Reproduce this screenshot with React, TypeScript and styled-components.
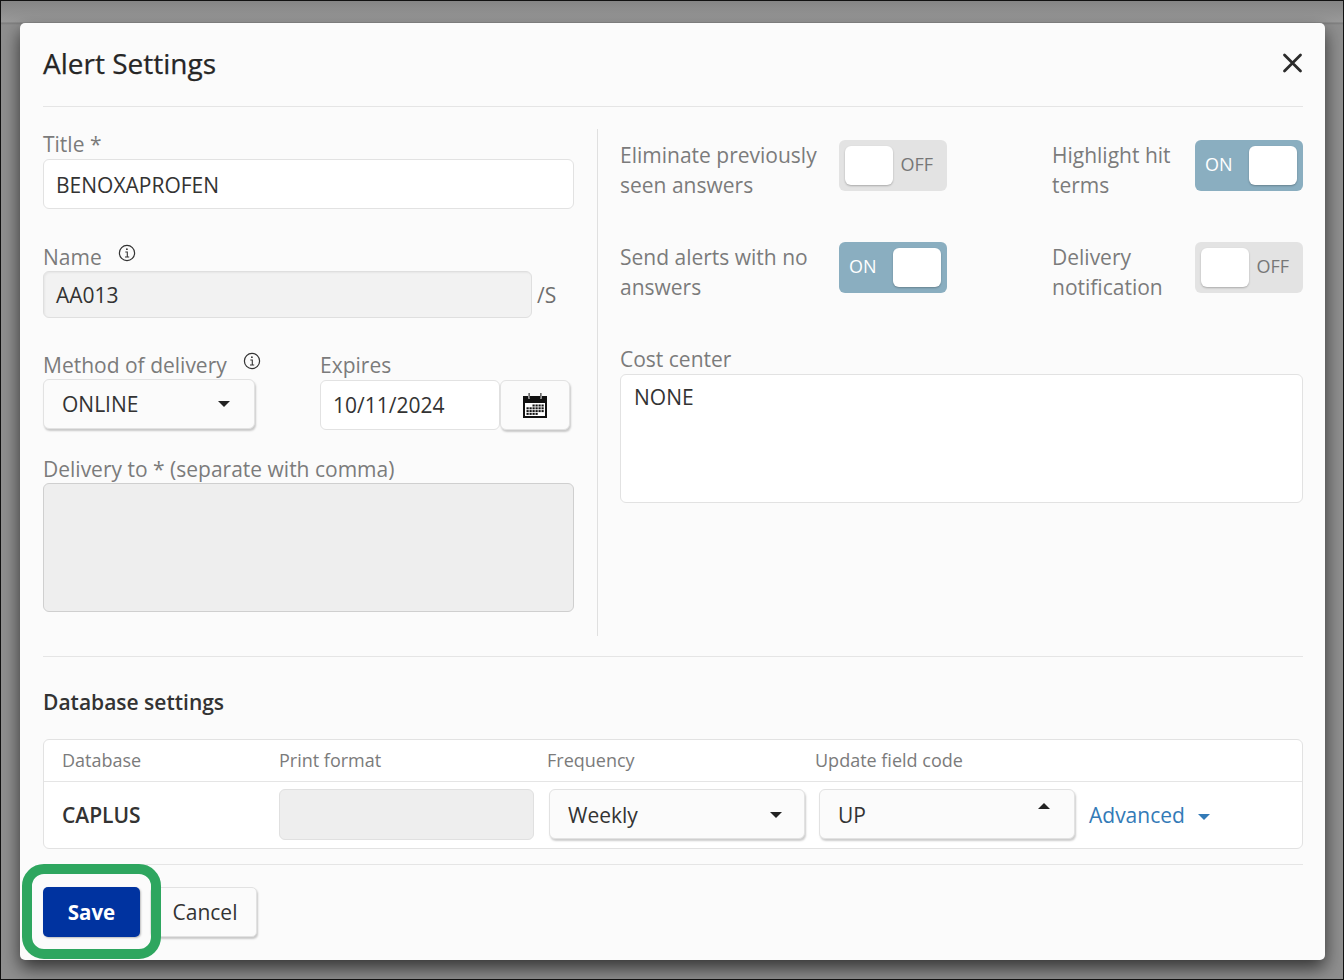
import React from "react";
import styled, { createGlobalStyle } from "styled-components";

const Global = createGlobalStyle`
  html, body { margin: 0; padding: 0; }
  body { font-family: "Open Sans", "Liberation Sans", sans-serif; }
  * { box-sizing: border-box; }
`;

const Backdrop = styled.div`
  width: 1344px; height: 980px; overflow: hidden;
  background: linear-gradient(#858585 0, #9a9a9a 21px, #7c7c7c 22px, #8f8f8f 24px);
  border: 1px solid #111;
  padding: 22px 18px 19px 19px;
`;
const Modal = styled.div`
  position: relative;
  height: 937px;
  background: #fbfbfb;
  border-radius: 5px;
  box-shadow: 0 8px 18px rgba(0,0,0,.65);
  padding: 0 22px 0 23px;
`;
const Header = styled.header`
  height: 84px; display: flex; align-items: center; justify-content: space-between;
  border-bottom: 1px solid #e5e5e5; padding-bottom: 4px;
`;
const Title = styled.h1`
  margin: 0; font-size: 28px; font-weight: 500; color: #262626; line-height: 36px;
  -webkit-text-stroke: 0.25px #262626;
`;
const Close = styled.button`
  width: 22px; height: 22px; border: 0; padding: 0; background: none; display: flex;
  svg { display: block; }
`;
const Top = styled.div`
  display: grid; grid-template-columns: 555px 705px;
  height: 550px; border-bottom: 1px solid #e5e5e5; padding-top: 22px;
`;
const LeftCol = styled.div`
  width: 555px; height: 507px; padding-right: 23px; border-right: 1px solid #e0e0e0;
`;
const RightCol = styled.div`padding-left: 22px; width: 705px;`;
const Label = styled.label<{ $mt?: number; $mb?: number }>`
  display: flex; align-items: flex-start; gap: 16px;
  font-size: 21px; line-height: 28px; height: 28px; color: #7b7b7b;
  margin-top: ${p => p.$mt ?? 0}px; margin-bottom: ${p => p.$mb ?? 0}px;
  white-space: nowrap;
`;
const Info = styled.svg`width: 18px; height: 18px; margin-top: 1px; flex: none;`;
const fieldBase = `
  border: 1px solid #e2e2e2; border-radius: 6px; font-size: 21px; color: #333;
  display: flex; align-items: center; padding: 0 12px; background: #fff;
`;
const Input = styled.div<{ $h?: number; $w?: string; $disabled?: boolean; $pt?: number }>`
  ${fieldBase}
  height: ${p => p.$h ?? 50}px; width: ${p => p.$w ?? "100%"};
  padding-top: ${p => p.$pt ?? 0}px;
  background: ${p => p.$disabled ? "#f2f2f2" : "#fff"};
  ${p => p.$disabled ? "box-shadow: inset 1px 1px 2px rgba(0,0,0,.05); border-color:#dfdfdf;" : ""}
`;
const NameRow = styled.div`
  display: flex; align-items: center; gap: 5px; font-size: 21px; color: #6f6f6f;
`;
const SplitRow = styled.div`
  display: flex; align-items: flex-start; margin-top: 33px;
`;
const MethodCol = styled.div`width: 277px; flex: none;`;
const ExpiresCol = styled.div`flex: 1;`;
const SelectBox = styled.div<{ $w: number; $pr?: number }>`
  width: ${p => p.$w}px; height: 50px; display: flex; align-items: center; justify-content: space-between;
  padding: 0 ${p => p.$pr ?? 24}px 0 18px; font-size: 21px; color: #333;
  background: #fbfbfb;
  border: 1px solid #e2e2e2; border-radius: 6px;
  box-shadow: 1px 2px 2px rgba(0,0,0,.2);
`;
const Caret = styled.span<{ $up?: boolean; $c?: string; $drop?: number }>`
  width: 0; height: 0; border-left: 6px solid transparent; border-right: 6px solid transparent;
  margin-top: ${p => p.$drop ?? 0}px;
  ${p => p.$up
    ? `border-bottom: 6px solid ${p.$c ?? "#222"}; transform: translateY(-9px);`
    : `border-top: 6px solid ${p.$c ?? "#222"};`}
`;
const DateRow = styled.div`display: flex; margin-top: 1px;`;
const CalBtn = styled.button`
  width: 70px; height: 50px; background: #fbfbfb; border: 1px solid #e2e2e2; border-radius: 6px;
  box-shadow: 1px 2px 2px rgba(0,0,0,.2); display: flex; align-items: center; justify-content: center; padding: 0;
`;
const Area = styled.div<{ $disabled?: boolean; $h: number }>`
  height: ${p => p.$h}px; border-radius: 6px; font-size: 21px; color: #333;
  padding: 8px 13px; background: ${p => p.$disabled ? "#eee" : "#fff"};
  border: 1px solid ${p => p.$disabled ? "#cfcfcf" : "#e2e2e2"};
`;
const ToggleGrid = styled.div`
  display: grid; grid-template-columns: 432px 251px; row-gap: 41px; margin-top: 11px;
`;
const ToggleCell = styled.div`
  display: flex; justify-content: space-between; align-items: flex-start; height: 61px;
  &:nth-child(odd) { width: 327px; }
`;
const ToggleText = styled.div`
  font-size: 21px; line-height: 30px; color: #7b7b7b;
`;
const Toggle = styled.div<{ $on?: boolean }>`
  width: 108px; height: 51px; flex: none; border-radius: 6px; padding: 6px;
  display: flex; align-items: center; justify-content: space-between;
  flex-direction: ${p => p.$on ? "row" : "row-reverse"};
  background: ${p => p.$on ? "#8aaec0" : "#e3e3e3"};
  color: ${p => p.$on ? "#fff" : "#777"};
  font-size: 18px;
`;
const ToggleLabel = styled.span<{ $on?: boolean }>`
  margin-bottom: 4px;
  ${p => p.$on ? "padding-left: 4px;" : "padding-right: 8px;"}
`;
const Knob = styled.span`
  width: 48px; height: 39px; background: #fff; border-radius: 6px; box-shadow: 0 1px 2px rgba(0,0,0,.25);
`;
const DbTitle = styled.h2`
  margin: 31px 0 23px; font-size: 21px; line-height: 28px; font-weight: 600; color: #333;
`;
const Table = styled.div`
  background: #fff; border: 1px solid #e2e2e2; border-radius: 6px; height: 110px;
`;
const HeadRow = styled.div`
  display: grid; grid-template-columns: 217px 268px 268px 1fr; height: 42px; align-items: center;
  border-bottom: 1px solid #e5e5e5; padding: 0 0 2px 18px; font-size: 18px; color: #7b7b7b;
`;
const DataRow = styled.div`
  display: flex; align-items: center; height: 67px; padding: 0 0 3px 18px;
`;
const DbName = styled.div`width: 217px; flex: none; font-size: 21px; font-weight: 600; color: #333; padding-top: 2px;`;
const Blank = styled.div`
  width: 255px; height: 51px; margin-right: 15px; flex: none; background: #eee; border: 1px solid #e0e0e0; border-radius: 6px;
`;
const TableSelect = styled(SelectBox)`margin-right: 14px; flex: none; padding-top: 2px;`;
const Advanced = styled.a`
  display: flex; align-items: center; gap: 13px; font-size: 21px; color: #337ab7; padding-top: 2px;
`;
const Footer = styled.div`
  margin-top: 15px; border-top: 1px solid #e5e5e5; padding-top: 22px; display: flex; gap: 10px;
`;
const Save = styled.button`
  width: 97px; height: 50px; border: 0; border-radius: 5px; background: #0033a0; color: #fff;
  font: 700 20.5px "Open Sans", sans-serif; box-shadow: 1px 1px 2px rgba(0,0,0,.25);
`;
const Cancel = styled.button`
  width: 107px; height: 50px; padding: 0 0 0 3px; background: #fbfbfb; border: 1px solid #e2e2e2; border-radius: 5px;
  color: #333; font: 400 21px "Open Sans", sans-serif; box-shadow: 1px 2px 2px rgba(0,0,0,.2);
`;
const Highlight = styled.div`
  position: absolute; left: 2px; top: 841px; width: 139px; height: 95px;
  border: 10px solid #2ea65f; border-radius: 22px; pointer-events: none;
`;

const InfoIcon = () => (
  <Info viewBox="0 0 18 18" fill="none" stroke="#333">
    <circle cx="9" cy="9" r="7.6" strokeWidth="1.2" />
    <path d="M7.3 8h2v5M7 13h4.2" strokeWidth="1.1" />
    <circle cx="8.9" cy="5.2" r=".9" fill="#333" stroke="none" />
  </Info>
);

const Cal = () => (
  <svg width="26" height="25" viewBox="0 0 26 25">
    <path d="M1 3h5v2.5h2V3h10v2.5h2V3h5v22H1z" fill="#111" />
    <path d="M6.6 0h1v5h-1zM18.4 0h1v5h-1z" fill="#111" />
    <path d="M3 10h20v13H3z" fill="#fff" />
    <g fill="#111">
      {[0,1,2,3].map(r => [0,1,2,3,4,5].map(c => (
        (r === 0 && c < 2) || (r === 3 && c > 3) ? null :
        <rect key={r + "-" + c} x={4.5 + c * 3} y={11.5 + r * 2.8} width="2.2" height="2" />
      )))}
    </g>
  </svg>
);

const ToggleSwitch = ({ on }: { on?: boolean }) => (
  <Toggle $on={on}>
    <ToggleLabel $on={on}>{on ? "ON" : "OFF"}</ToggleLabel>
    <Knob />
  </Toggle>
);

export default function App() {
  return (
    <>
      <Global />
      <Backdrop>
        <Modal>
          <Header>
            <Title>Alert Settings</Title>
            <Close aria-label="Close">
              <svg width="22" height="22" viewBox="0 0 22 22" fill="none" stroke="#2b2b2b" strokeWidth="2.8" strokeLinecap="round">
                <path d="M3.5 3l16 16M19.5 3l-16 16" />
              </svg>
            </Close>
          </Header>
          <Top>
            <LeftCol>
              <Label $mt={1} $mb={1}>Title *</Label>
              <Input $pt={2}>BENOXAPROFEN</Input>
              <Label $mt={34}>Name <InfoIcon /></Label>
              <NameRow>
                <Input $h={47} $w="489px" $disabled>AA013</Input>
                /S
              </NameRow>
              <SplitRow>
                <MethodCol>
                  <Label>Method of delivery <InfoIcon /></Label>
                  <SelectBox $w={212}>ONLINE <Caret /></SelectBox>
                </MethodCol>
                <ExpiresCol>
                  <Label>Expires</Label>
                  <DateRow>
                    <Input $w="180px">10/11/2024</Input>
                    <CalBtn aria-label="Pick date"><Cal /></CalBtn>
                  </DateRow>
                </ExpiresCol>
              </SplitRow>
              <Label $mt={25}>Delivery to * (separate with comma)</Label>
              <Area $disabled $h={129} />
            </LeftCol>
            <RightCol>
              <ToggleGrid>
                <ToggleCell>
                  <ToggleText>Eliminate previously<br />seen answers</ToggleText>
                  <ToggleSwitch />
                </ToggleCell>
                <ToggleCell>
                  <ToggleText>Highlight hit<br />terms</ToggleText>
                  <ToggleSwitch on />
                </ToggleCell>
                <ToggleCell>
                  <ToggleText>Send alerts with no<br />answers</ToggleText>
                  <ToggleSwitch on />
                </ToggleCell>
                <ToggleCell>
                  <ToggleText>Delivery<br />notification</ToggleText>
                  <ToggleSwitch />
                </ToggleCell>
              </ToggleGrid>
              <Label $mt={42} $mb={1}>Cost center</Label>
              <Area $h={129}>NONE</Area>
            </RightCol>
          </Top>
          <DbTitle>Database settings</DbTitle>
          <Table>
            <HeadRow>
              <span>Database</span>
              <span>Print format</span>
              <span>Frequency</span>
              <span>Update field code</span>
            </HeadRow>
            <DataRow>
              <DbName>CAPLUS</DbName>
              <Blank />
              <TableSelect $w={256} $pr={22}>Weekly <Caret /></TableSelect>
              <TableSelect $w={256}>UP <Caret $up /></TableSelect>
              <Advanced>Advanced <Caret $c="#337ab7" $drop={3} /></Advanced>
            </DataRow>
          </Table>
          <Footer>
            <Save>Save</Save>
            <Cancel>Cancel</Cancel>
          </Footer>
          <Highlight />
        </Modal>
      </Backdrop>
    </>
  );
}
